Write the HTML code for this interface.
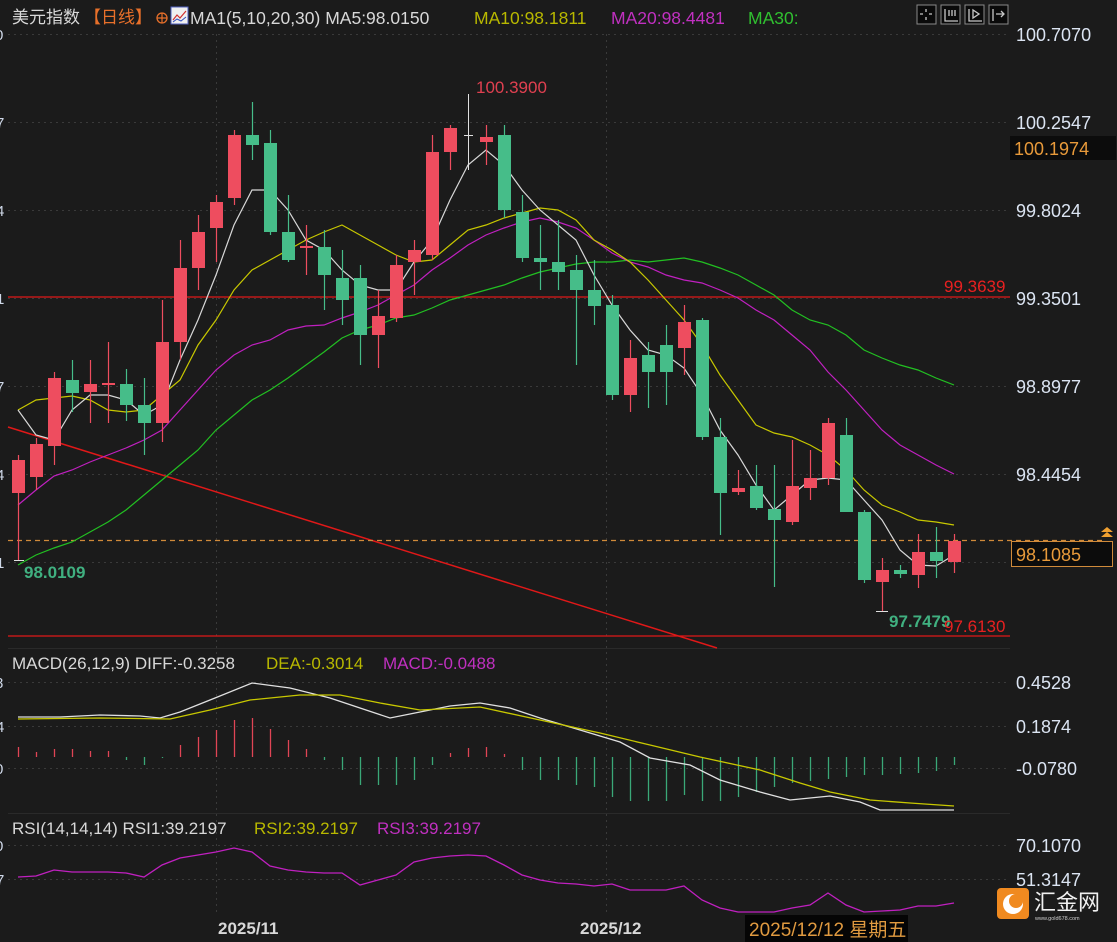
<!DOCTYPE html>
<html><head><meta charset="utf-8"><style>
html,body{margin:0;padding:0;background:#1b1b1b;width:1117px;height:942px;overflow:hidden}
svg{display:block}
text{font-family:"Liberation Sans","Noto Sans CJK SC",sans-serif}
</style></head><body>
<svg id="s" width="1117" height="942" xmlns="http://www.w3.org/2000/svg">
<rect width="1117" height="942" fill="#1b1b1b"/>
<g id="grid" stroke="#3a3a3a" stroke-dasharray="2,4" stroke-width="1"></g>
<g id="ma"></g>
<g id="cd"></g>
<!-- header -->
<text x="12" y="23" font-size="17" fill="#d8d8d8">美元指数</text>
<text x="84" y="23" font-size="17" fill="#e8702a">【日线】</text>
<circle cx="162" cy="18" r="5" fill="none" stroke="#e8702a" stroke-width="1.3"/><path d="M157 18h10M162 13v10" stroke="#e8702a" stroke-width="1.2"/>
<rect x="171" y="7" width="17" height="17" fill="#f0f0f0" stroke="#5060c0"/><path d="M173 20l4-5 3 3 6-7" stroke="#d03030" fill="none" stroke-width="1.2"/><path d="M173 22l4-3 4 2 5-4" stroke="#3050c0" fill="none"/>
<text x="190" y="24" font-size="17.5" fill="#d8d8d8">MA1(5,10,20,30) MA5:98.0150</text>
<text x="474" y="24" font-size="17.5" fill="#b8b800">MA10:98.1811</text>
<text x="611" y="24" font-size="17.5" fill="#c030c0">MA20:98.4481</text>
<text x="748" y="24" font-size="17.5" fill="#30c030">MA30:</text>
<g fill="#0a0a0a" stroke="#8a8a8a"><rect x="917" y="5" width="19" height="19"/><rect x="941" y="5" width="19" height="19"/><rect x="965" y="5" width="19" height="19"/><rect x="989" y="5" width="19" height="19"/></g>
<g stroke="#c8c8c8" fill="none" stroke-width="1.3"><path d="M926 9v3M926 17v3M920 14h3M929 14h3"/><path d="M945 9v12h13M949 10v6M952 10v6M955 10v6"/><path d="M969 9v12h13M973 10v8l6-4z"/><path d="M993 9v12M996 14h8M1001 11l3 3-3 3"/></g>
<!-- right axis -->
<g font-size="18" fill="#dbe4f2">
<text x="1016" y="41">100.7070</text><text x="1016" y="129">100.2547</text><text x="1016" y="217">99.8024</text>
<text x="1016" y="305">99.3501</text><text x="1016" y="393">98.8977</text><text x="1016" y="481">98.4454</text>
<text x="1016" y="689">0.4528</text><text x="1016" y="733">0.1874</text><text x="1016" y="775">-0.0780</text>
<text x="1016" y="852">70.1070</text><text x="1016" y="886">51.3147</text>
</g>
<g font-size="15" fill="#cfd8e8"><text x="-5" y="40">0</text><text x="-4" y="128">7</text><text x="-4" y="216">4</text><text x="-4" y="304">1</text><text x="-4" y="392">7</text><text x="-4" y="480">4</text><text x="-4" y="568">1</text><text x="-5" y="688">8</text><text x="-4" y="732">4</text><text x="-5" y="774">0</text><text x="-5" y="851">0</text><text x="-4" y="885">7</text></g>
<rect x="1010" y="136" width="106" height="24" fill="#0c0c0c"/>
<text x="1014" y="155" font-size="18" fill="#e89a3a">100.1974</text>
<rect x="1011.5" y="541.5" width="101" height="25" fill="#0c0c0c" stroke="#d08a3a"/>
<text x="1016" y="561" font-size="18" fill="#e89a3a">98.1085</text>
<path d="M1101 537l6-5 6 5zM1101 532l6-5 6 5z" fill="#f0a030"/>
<text x="944" y="292" font-size="17" fill="#e82020">99.3639</text>
<text x="476" y="93" font-size="17" fill="#e04050">100.3900</text>
<text x="24" y="578" font-size="17" fill="#40b080" font-weight="bold">98.0109</text>
<text x="889" y="627" font-size="17" fill="#40b080" font-weight="bold">97.7479</text>
<text x="944" y="632" font-size="17" fill="#e82020">97.6130</text>
<!-- pane titles -->
<text x="12" y="669" font-size="17" fill="#d8d8d8">MACD(26,12,9) DIFF:-0.3258</text>
<text x="266" y="669" font-size="17" fill="#b8b800">DEA:-0.3014</text>
<text x="383" y="669" font-size="17" fill="#c030c0">MACD:-0.0488</text>
<text x="12" y="834" font-size="17" fill="#d8d8d8">RSI(14,14,14) RSI1:39.2197</text>
<text x="254" y="834" font-size="17" fill="#b8b800">RSI2:39.2197</text>
<text x="377" y="834" font-size="17" fill="#c030c0">RSI3:39.2197</text>
<text x="218" y="934" font-size="17" fill="#d8d8d8" font-weight="bold">2025/11</text>
<text x="580" y="934" font-size="17" fill="#d8d8d8" font-weight="bold">2025/12</text>
<rect x="745" y="915" width="163" height="27" fill="#050505"/>
<text x="749" y="936" font-size="19" fill="#e09a40">2025/12/12 星期五</text>
<rect x="997" y="888" width="32" height="31" rx="4" fill="#f08a20"/>
<circle cx="1013" cy="904" r="10" fill="#fff"/><circle cx="1016" cy="901" r="7" fill="#f08a20"/>
<text x="1034" y="910" font-size="22" fill="#f0f0f0">汇金网</text>
<text x="1035" y="920" font-size="5.5" fill="#cfcfcf">www.gold678.com</text>
</svg>
<script>
var NS="http://www.w3.org/2000/svg";
function el(p,t,a){var e=document.createElementNS(NS,t);for(var k in a)e.setAttribute(k,a[k]);document.getElementById(p).appendChild(e);return e;}
[34,122,210,298,386,474,562].forEach(function(y){el('grid','line',{x1:8,x2:1010,y1:y+.5,y2:y+.5});});
[682,726,768,845,879].forEach(function(y){el('grid','line',{x1:8,x2:1010,y1:y+.5,y2:y+.5});});
[216,606].forEach(function(x){el('grid','line',{x1:x+.5,x2:x+.5,y1:34,y2:915});});
el('grid','line',{x1:8,x2:1010,y1:648.5,y2:648.5,stroke:'#2a2a2a','stroke-dasharray':'0'});
el('grid','line',{x1:8,x2:1010,y1:813.5,y2:813.5,stroke:'#2a2a2a','stroke-dasharray':'0'});
function pl(pts,c,w){el('ma','polyline',{points:pts,fill:'none',stroke:c,'stroke-width':w||1.2});}
el('ma','line',{x1:8,y1:297,x2:1010,y2:297,stroke:'#e01818','stroke-width':1.3});
el('ma','line',{x1:8,y1:636,x2:1010,y2:636,stroke:'#e01818','stroke-width':1.3});
el('ma','line',{x1:8,y1:427,x2:717,y2:648,stroke:'#e01818','stroke-width':1.5});
el('ma','line',{x1:8,y1:540.5,x2:1105,y2:540.5,stroke:'#d08a3a','stroke-width':1.3,'stroke-dasharray':'5,4'});
var X=[];for(var i=0;i<53;i++)X.push(18+i*18);
function mk(ys){return ys.map(function(y,i){return X[i]+','+y}).join(' ');}
pl(mk([565,555,548,542,532,522,510,495,480,465,450,430,415,400,390,378,365,352,338,330,325,318,315,308,300,295,290,285,278,272,268,264,262,262,260,262,260,258,262,268,275,285,295,310,320,325,335,350,358,365,370,378,385]),'#22c022');
pl(mk([505,490,476,470,462,455,448,440,430,410,390,370,355,345,340,330,326,325,318,312,305,295,285,270,258,245,235,228,222,218,222,228,240,253,262,267,275,280,283,290,298,310,320,335,350,372,390,410,430,445,455,465,474]),'#c020c0');
pl(mk([410,400,398,396,400,410,412,410,395,380,345,320,290,270,260,250,240,232,225,235,245,255,262,260,245,230,225,218,213,208,210,220,240,250,262,280,300,320,345,375,400,425,433,437,445,455,470,490,505,512,520,522,525]),'#c8c800');
pl(mk([410,435,440,410,395,395,400,415,405,360,320,275,225,190,190,210,240,250,270,285,290,290,262,240,200,165,150,165,190,210,225,240,275,305,330,350,355,368,395,430,455,485,510,495,480,478,480,500,520,550,565,566,555]),'#d8d8d8');
var C=[[493,460,455,560],[477,444,438,490],[446,378,372,465],[380,393,360,412],[392,384,360,423],[385,383,342,423],[384,405,369,421],[405,423,378,455],[423,342,300,442],[342,268,240,360],[268,232,215,290],[228,202,195,262],[198,135,130,205],[135,145,102,160],[143,232,130,235],[232,260,195,262],[248,246,225,275],[247,275,230,310],[278,300,250,325],[278,335,265,365],[335,316,290,368],[318,265,255,322],[262,250,240,295],[255,152,135,260],[152,128,125,170],[135,135,97,170],[142,137,125,165],[135,210,125,218],[212,258,195,262],[258,262,225,290],[262,272,220,290],[270,290,255,365],[290,306,260,325],[305,395,295,400],[395,358,340,412],[355,372,342,408],[345,372,325,405],[348,322,305,375],[320,437,318,440],[437,493,418,535],[492,488,470,495],[486,508,465,510],[509,520,465,587],[522,486,440,525],[488,478,450,500],[478,423,418,485],[435,512,418,512],[512,580,510,583],[582,570,558,612],[570,574,565,578],[575,552,534,588],[552,561,527,578],[562,541,534,573]];
C.forEach(function(c,i){var x=X[i];
 if(i==25){el('cd','line',{x1:x+.5,x2:x+.5,y1:97,y2:170,stroke:'#e0e0e0'});el('cd','line',{x1:x-4,x2:x+5,y1:135.5,y2:135.5,stroke:'#e0e0e0'});return;}
 var up=c[1]<c[0];var col=up?'#ee4d5f':'#46bd89';
 var t=Math.min(c[0],c[1]),b=Math.max(c[0],c[1]);
 el('cd','line',{x1:x+.5,x2:x+.5,y1:c[2],y2:c[3],stroke:col,'stroke-width':1.2});
 el('cd','rect',{x:x-6,y:t,width:13,height:Math.max(2,b-t),fill:col});
});
el('cd','line',{x1:14,x2:24,y1:560.5,y2:560.5,stroke:'#e0e0e0'});
el('cd','line',{x1:876,x2:888,y1:611.5,y2:611.5,stroke:'#e0e0e0'});
el('cd','line',{x1:468.5,x2:468.5,y1:94,y2:100,stroke:'#e0e0e0'});
var H=[-10,-5,-8,-8,-6,-6,3,8,1,-12,-20,-27,-37,-39,-28,-17,-8,3,13,28,28,28,23,8,-4,-9,-10,-3,13,23,23,28,30,40,44,44,44,38,44,44,40,35,30,26,24,22,20,18,18,17,16,14,8];
H.forEach(function(h,i){el('cd','line',{x1:X[i]+.5,x2:X[i]+.5,y1:757,y2:757+h,stroke:h<0?'#e04555':'#3aa878','stroke-width':1.3});});
function pp(pts,c){el('cd','polyline',{points:pts,fill:'none',stroke:c,'stroke-width':1.3});}
pp('18,717 60,717 100,715 140,716 160,718 180,712 215,698 252,683 290,688 330,698 360,708 390,718 420,712 450,706 480,703 510,708 540,718 580,730 620,742 650,758 690,765 720,780 760,792 790,800 830,796 860,802 880,810 954,810','#e0e0e0');
pp('18,719 100,718 170,719 210,710 250,700 300,695 340,695 380,703 420,710 480,707 540,720 600,733 650,745 700,757 760,770 800,783 830,792 870,800 910,803 954,806','#c8c800');
pp('18,877 36,876 54,870 72,872 90,872 108,872 126,873 144,877 162,865 180,858 198,855 216,852 234,848 252,852 270,866 288,870 306,872 324,873 342,873 360,885 378,880 396,875 414,862 432,858 450,856 468,855 486,856 504,865 522,875 540,880 558,883 576,884 594,886 612,884 630,890 648,890 666,890 684,886 702,900 720,908 738,912 756,912 774,912 792,908 810,905 828,893 846,905 864,912 882,911 900,910 918,906 936,906 954,903','#c020c0');
</script>
</body></html>
